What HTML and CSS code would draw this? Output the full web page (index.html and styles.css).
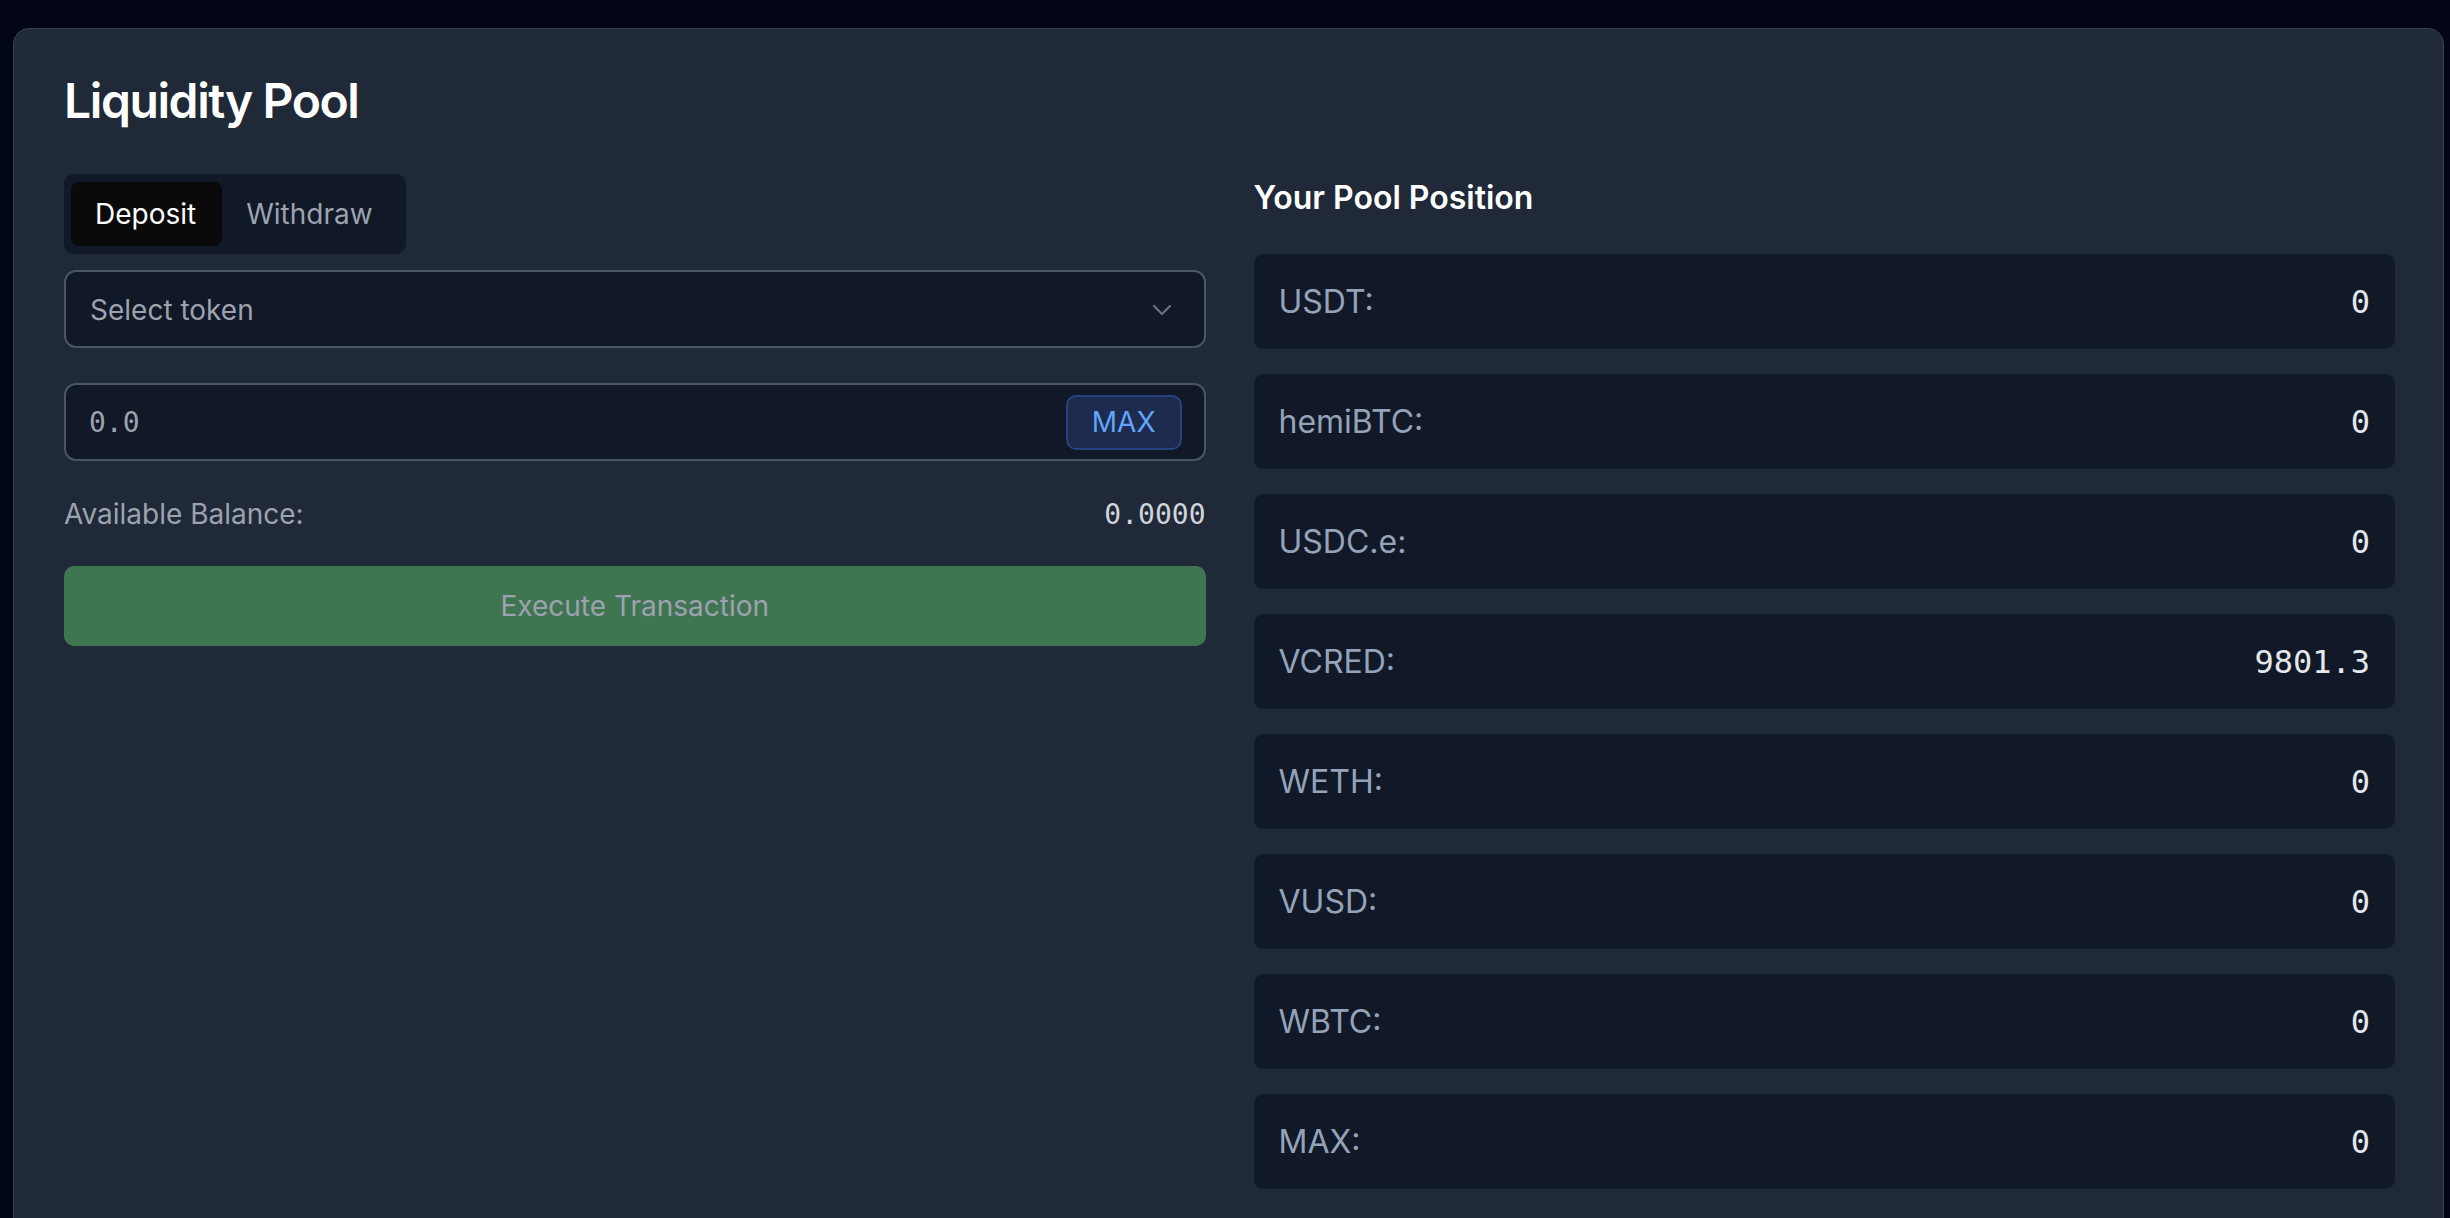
FILE: index.html
```html
<!DOCTYPE html>
<html lang="en">
<head>
<meta charset="utf-8">
<title>Liquidity Pool</title>
<link rel="stylesheet" href="styles.css">
</head>
<body>
<div class="page">
  <section class="card">
    <h1 class="title">Liquidity Pool</h1>
    <div class="grid">
      <div class="col-left">
        <div class="tabs">
          <button class="tab tab-active">Deposit</button>
          <button class="tab">Withdraw</button>
        </div>
        <div class="select">
          <span class="select-text">Select token</span>
          <svg class="chevron" width="20" height="12" viewBox="0 0 20 12"><path d="M2 2 L10 10 L18 2" fill="none" stroke="#6b7280" stroke-width="2.2" stroke-linecap="round" stroke-linejoin="round"/></svg>
        </div>
        <div class="amount">
          <span class="amount-placeholder">0.0</span>
          <button class="max-btn">MAX</button>
        </div>
        <div class="balance">
          <span class="balance-label">Available Balance:</span>
          <span class="balance-value">0.0000</span>
        </div>
        <button class="execute">Execute Transaction</button>
      </div>
      <div class="col-right">
        <h2 class="subtitle">Your Pool Position</h2>
        <div class="rows">
          <div class="row"><span class="row-label">USDT:</span><span class="row-value">0</span></div>
          <div class="row"><span class="row-label">hemiBTC:</span><span class="row-value">0</span></div>
          <div class="row"><span class="row-label">USDC.e:</span><span class="row-value">0</span></div>
          <div class="row"><span class="row-label">VCRED:</span><span class="row-value">9801.3</span></div>
          <div class="row"><span class="row-label">WETH:</span><span class="row-value">0</span></div>
          <div class="row"><span class="row-label">VUSD:</span><span class="row-value">0</span></div>
          <div class="row"><span class="row-label">WBTC:</span><span class="row-value">0</span></div>
          <div class="row"><span class="row-label">MAX:</span><span class="row-value">0</span></div>
        </div>
      </div>
    </div>
  </section>
</div>
</body>
</html>
```
FILE: styles.css
```css
html, body {
  margin: 0;
  padding: 0;
  background: #020617;
  overflow: hidden;
}
body {
  font-family: Inter, "Liberation Sans", sans-serif;
  color: #ffffff;
}
.page {
  padding: 28px 6px 0 13px;
}
.card {
  background: #1f2937;
  border: 1px solid #374151;
  border-radius: 16px;
  padding: 40px 48px 48px 50px;
}
.title {
  margin: 0 0 41px 0;
  font-size: 48px;
  line-height: 64px;
  font-weight: 600;
  color: #ffffff;
  letter-spacing: -1.4px;
}
.grid {
  display: grid;
  grid-template-columns: 1fr 1fr;
  column-gap: 48px;
  align-items: start;
}
.col-left {
  display: flex;
  flex-direction: column;
  align-items: stretch;
}
.tabs {
  align-self: flex-start;
  display: flex;
  background: #111827;
  border-radius: 10px;
  padding: 8px 8px 8px 7px;
}
.tab {
  font-family: inherit;
  font-size: 28px;
  line-height: 40px;
  height: 64px;
  padding: 0 25px 0 24px;
  border: none;
  border-radius: 8px;
  background: transparent;
  color: #9ca3af;
  font-weight: 400;
}
.tab-active {
  background: #0a0a0a;
  color: #ffffff;
  padding: 0 26px 0 24px;
}
.select {
  margin-top: 16px;
  height: 78px;
  box-sizing: border-box;
  border: 2px solid #4b5563;
  border-radius: 12px;
  background: #111827;
  display: flex;
  align-items: center;
  justify-content: space-between;
  padding: 2px 32px 0 24px;
}
.select-text {
  font-size: 28px;
  color: #9ca3af;
}
.chevron {
  display: block;
}
.amount {
  margin-top: 35px;
  height: 78px;
  box-sizing: border-box;
  border: 2px solid #4b5563;
  border-radius: 12px;
  background: #111827;
  display: flex;
  align-items: center;
  justify-content: space-between;
  padding: 0 22px 0 23px;
}
.amount-placeholder {
  font-family: "DejaVu Sans Mono", "Liberation Mono", monospace;
  font-size: 28px;
  color: #9ca3af;
}
.max-btn {
  font-family: inherit;
  font-size: 28px;
  line-height: 39px;
  padding: 6px 24px;
  background: #1e2b4f;
  color: #60a5fa;
  border: 2px solid #25427d;
  border-radius: 10px;
}
.balance {
  margin-top: 33px;
  display: flex;
  justify-content: space-between;
  align-items: center;
  height: 40px;
}
.balance-label {
  font-size: 28px;
  color: #9ca3af;
}
.balance-value {
  font-family: "DejaVu Sans Mono", "Liberation Mono", monospace;
  font-size: 28px;
  color: #d1d5db;
}
.execute {
  margin-top: 32px;
  height: 80px;
  border: none;
  border-radius: 10px;
  background: #407552;
  color: #9ca3af;
  font-family: inherit;
  font-size: 28px;
}
.subtitle {
  margin: 0 0 32px 0;
  font-size: 32px;
  line-height: 48px;
  font-weight: 600;
  color: #ffffff;
}
.rows {
  display: flex;
  flex-direction: column;
  gap: 25px;
}
.row {
  height: 95px;
  box-sizing: border-box;
  background: #111827;
  border-radius: 10px;
  display: flex;
  align-items: center;
  justify-content: space-between;
  padding: 0 25px;
}
.row-label {
  font-size: 32px;
  color: #94a3b8;
}
.row-value {
  font-family: "DejaVu Sans Mono", "Liberation Mono", monospace;
  font-size: 32px;
  color: #e5e7eb;
}
```
